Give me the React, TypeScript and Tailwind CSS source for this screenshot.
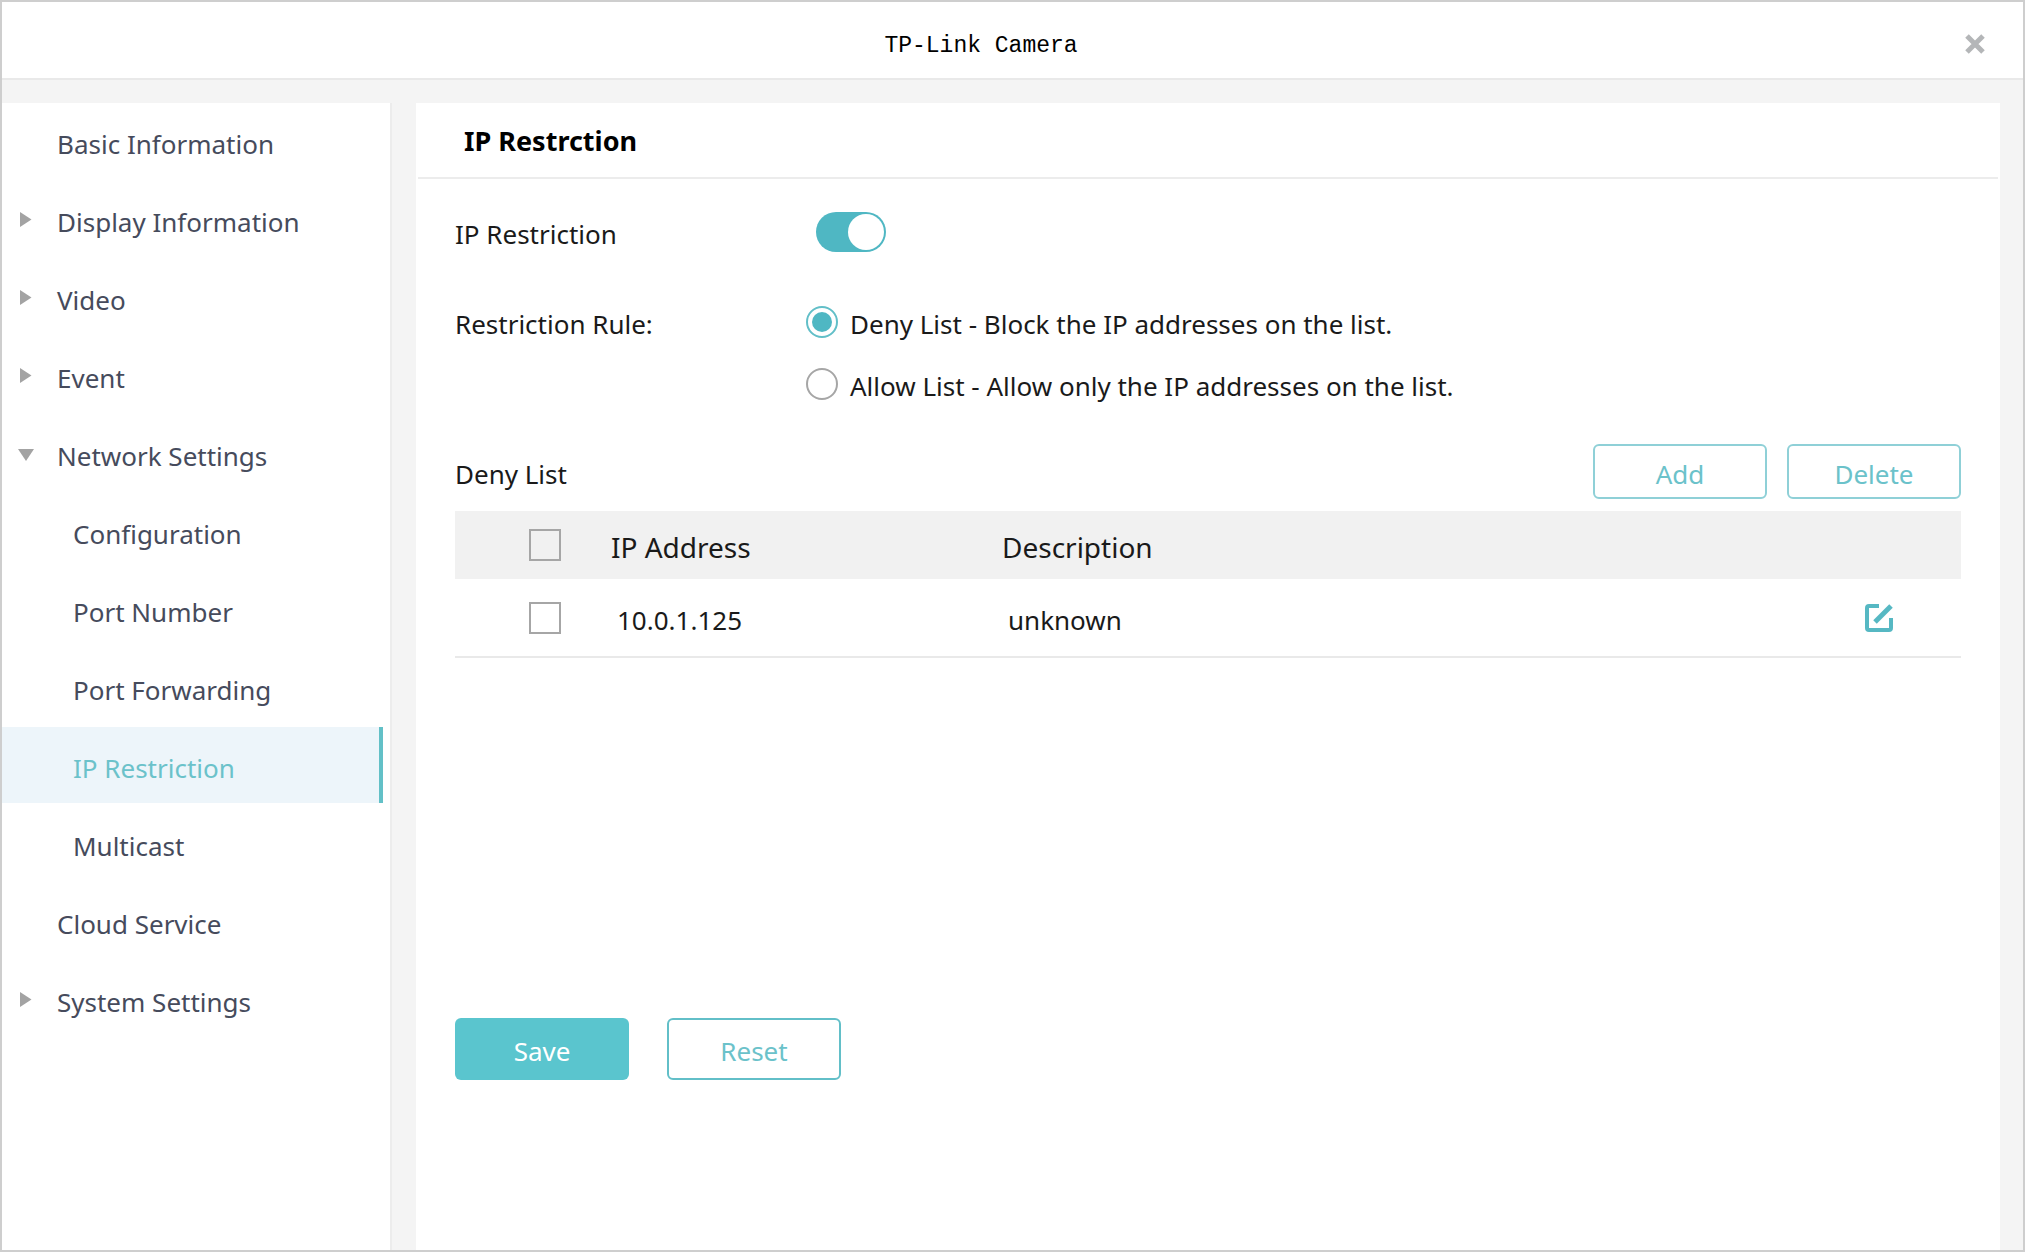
import React, { useState } from "react";

const menu = [
  { label: "Basic Information" },
  { label: "Display Information", arrow: "right" },
  { label: "Video", arrow: "right" },
  { label: "Event", arrow: "right" },
  { label: "Network Settings", arrow: "down" },
  { label: "Configuration", sub: true },
  { label: "Port Number", sub: true },
  { label: "Port Forwarding", sub: true },
  { label: "IP Restriction", sub: true },
  { label: "Multicast", sub: true },
  { label: "Cloud Service" },
  { label: "System Settings", arrow: "right" },
];

const rules = [
  { value: "deny", label: "Deny List - Block the IP addresses on the list." },
  { value: "allow", label: "Allow List - Allow only the IP addresses on the list." },
];

const addresses = [{ ip: "10.0.1.125", description: "unknown" }];

const Arrow = ({ direction }: { direction?: string }) => {
  if (!direction) return null;
  return (
    <svg viewBox="0 0 16 16" className="size-4 fill-[#a3a3a3]" aria-hidden="true">
      {direction === "down" ? <path d="M0 4h16L8 16z" /> : <path d="M2 1v15L13.5 8.5z" />}
    </svg>
  );
};

const Checkbox = ({ label }: { label: string }) => (
  <input
    type="checkbox"
    aria-label={label}
    className="block size-8 appearance-none border-2 border-[#a6a6a6] checked:bg-[#4fb7c3]"
  />
);

const Sidebar = () => {
  const [active, setActive] = useState("IP Restriction");

  return (
    <nav className="w-[390px] shrink-0 border-r-2 border-[#ececec] bg-white pr-[7px]">
      <ul className="space-y-0.5">
        {menu.map((item) => (
          <li key={item.label}>
            <button
              type="button"
              onClick={() => setActive(item.label)}
              className={`flex h-[76px] w-full items-center border-r-4 pl-4 text-left ${
                active === item.label
                  ? "border-[#62c0c7] bg-[#edf5fa] text-[#6bc2ca]"
                  : "border-transparent text-[#464b5c]"
              }`}>
              <span className="w-[39px] shrink-0">
                <Arrow direction={item.arrow} />
              </span>
              <span className={item.sub ? "pt-1.5 pl-4" : "pt-1.5"}>{item.label}</span>
            </button>
          </li>
        ))}
      </ul>
    </nav>
  );
};

const App = () => {
  const [enabled, setEnabled] = useState(true);
  const [rule, setRule] = useState("deny");

  return (
    <div className="flex min-h-screen flex-col border-2 border-[#cecece] bg-[#f4f4f4] font-['Noto_Sans',sans-serif] text-[26px] leading-9 text-[#1a1a1a]">
      <header className="flex h-[78px] items-center border-b-2 border-[#e9e9e9] bg-white pr-[37px]">
        <h1 className="grow pt-3 pr-1 text-center font-['Liberation_Mono',monospace] text-[23px] text-black">
          TP-Link Camera
        </h1>
        <button type="button" aria-label="Close" className="mt-2">
          <svg viewBox="0 0 22 22" className="size-[22px]" aria-hidden="true">
            <path d="M3 3l16 16M19 3L3 19" stroke="#b4b6b8" strokeWidth="5" />
          </svg>
        </button>
      </header>

      <div className="flex grow gap-6 pt-[23px] pr-[23px]">
        <Sidebar />

        <main className="grow bg-white">
          <h2 className="mx-0.5 border-b-2 border-[#ececec] pt-5 pb-[18px] pl-[46px] text-[27px] font-bold text-black">
            IP Restrction
          </h2>

          <div className="px-[39px]">
            <div className="mt-[33px] flex items-center">
              <label htmlFor="restriction" className="w-[361px] pt-1">
                IP Restriction
              </label>
              <input
                id="restriction"
                type="checkbox"
                role="switch"
                checked={enabled}
                onChange={(e) => setEnabled(e.target.checked)}
                className="h-10 w-[70px] appearance-none rounded-full bg-[#bfbfbf] p-0.5 before:block before:size-9 before:rounded-full before:bg-white checked:bg-[#4fb7c3] checked:before:ml-[30px]"
              />
            </div>

            <fieldset className="mt-[50px] flex">
              <legend className="float-left w-[351px] pt-1">Restriction Rule:</legend>
              <div className="space-y-[22px]">
                {rules.map((item) => (
                  <div key={item.value} className="flex items-center gap-3">
                    <input
                      id={item.value}
                      type="radio"
                      name="rule"
                      checked={rule === item.value}
                      onChange={() => setRule(item.value)}
                      className="size-8 appearance-none rounded-full border-2 border-[#a6a6a6] p-1 before:block before:size-5 before:rounded-full checked:border-[#62bfc8] checked:before:bg-[#4fb7c3]"
                    />
                    <label htmlFor={item.value} className="pt-1">
                      {item.label}
                    </label>
                  </div>
                ))}
              </div>
            </fieldset>

            <div className="mt-10 flex items-center justify-between">
              <h3 className="pt-1">Deny List</h3>
              <div className="flex gap-5 text-[#6bc2ca]">
                <button type="button" className="h-[55px] w-[174px] rounded-md border-2 border-[#8fd0d7] pt-1">
                  Add
                </button>
                <button type="button" className="h-[55px] w-[174px] rounded-md border-2 border-[#8fd0d7] pt-1">
                  Delete
                </button>
              </div>
            </div>

            <table className="mt-3 w-full table-fixed text-left">
              <colgroup>
                <col className="w-[156px]" />
                <col className="w-[391px]" />
                <col />
                <col className="w-[164px]" />
              </colgroup>
              <thead>
                <tr className="h-[68px] bg-[#f1f1f1] text-[28px]">
                  <th className="pl-[74px]">
                    <Checkbox label="Select all" />
                  </th>
                  <th className="pt-1 font-normal">IP Address</th>
                  <th className="pt-1 font-normal">Description</th>
                  <td />
                </tr>
              </thead>
              <tbody>
                {addresses.map((row) => (
                  <tr key={row.ip} className="h-[78px] border-b-2 border-[#e9e9e9]">
                    <td className="pl-[74px]">
                      <Checkbox label={row.ip} />
                    </td>
                    <td className="pt-1 pl-1.5">{row.ip}</td>
                    <td className="pt-1 pl-1.5">{row.description}</td>
                    <td>
                      <button type="button" aria-label="Edit" className="mx-auto block">
                        <svg viewBox="0 0 30 30" className="size-[30px]" fill="none" stroke="#56b8c3" aria-hidden="true">
                          <path d="M15 3H5Q3 3 3 5v20q0 2 2 2h20q2 0 2-2V15" strokeWidth="4" />
                          <path d="M11 19L27 3" strokeWidth="5" />
                        </svg>
                      </button>
                    </td>
                  </tr>
                ))}
              </tbody>
            </table>

            <div className="mt-[360px] flex gap-[38px]">
              <button type="button" className="h-[62px] w-[174px] rounded-md bg-[#5ac5ce] pt-1 text-white">
                Save
              </button>
              <button type="button" className="h-[62px] w-[174px] rounded-md border-2 border-[#62bfc8] pt-1 text-[#6bc2ca]">
                Reset
              </button>
            </div>
          </div>
        </main>
      </div>
    </div>
  );
};

export default App;
